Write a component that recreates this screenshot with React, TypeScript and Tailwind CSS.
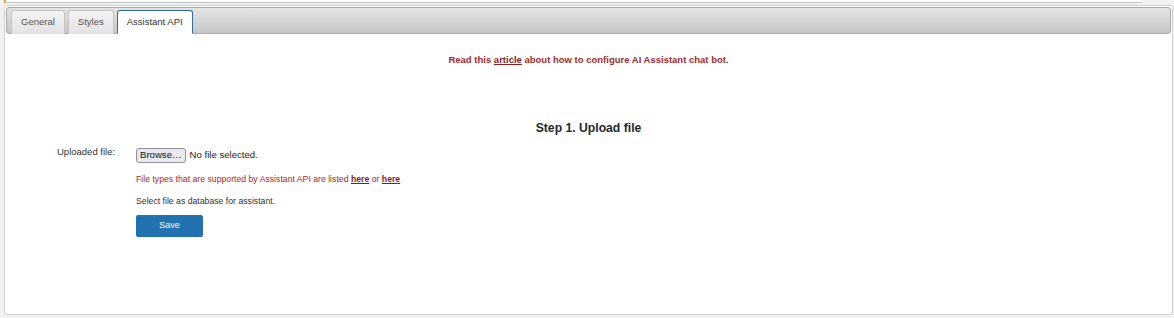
import React from 'react';

const tabs = ['General', 'Styles', 'Assistant API'];

export default function App() {
    const active = 'Assistant API';

    return (
        <div className="w-[1174px] h-[318px] bg-[#f1f1f1] font-['Liberation_Sans',Arial,sans-serif] overflow-hidden">
            <div className="ml-[4px] w-[1138px] h-[3px] bg-white border-b border-[#c3c4c7] border-l-2 border-l-[#dba617]" />
            <div className="ml-[4px] mr-[1px] mt-[2px] h-[310px] bg-white border border-[#d0d0d0] rounded-[3px] p-[1px]">
                <div className="h-[27px] flex items-end gap-[3px] pl-[4px] border border-[#aaaaaa] rounded-[3px] bg-gradient-to-b from-[#e4e4e4] to-[#c6c6c6]">
                    {tabs.map((t) => (
                        <div
                            key={t}
                            className={`h-[24px] flex items-center px-[9px] text-[9.5px] rounded-t-[3px] -mb-[1px] ${
                                t === active
                                    ? 'bg-white border border-[#2e6e9e] border-b-white text-[#333]'
                                    : 'bg-gradient-to-b from-[#f4f4f4] to-[#e2e2e2] border border-[#c5c5c5] border-b-0 text-[#555]'
                            }`}
                        >
                            {t}
                        </div>
                    ))}
                </div>

                <p className="mt-[19px] text-center text-[9.5px] font-bold text-[#a52a2a]">
                    Read this <a href="#" className="underline text-[#8b1a1a]">article</a> about how to configure AI Assistant chat bot.
                </p>

                <h3 className="mt-[52px] text-center text-[12.2px] font-bold text-[#23282d]">Step 1. Upload file</h3>

                <div className="mt-[10px] flex">
                    <div className="w-[80px] pl-[51px] -mt-[3px] text-[9.5px] text-[#333] whitespace-nowrap">Uploaded file:</div>
                    <div className="ml-[50px] flex flex-col">
                        <div className="flex items-center gap-[4px]">
                            <button className="h-[15px] px-[3px] text-[9.6px] leading-none text-[#111] bg-[#e9e9ed] border border-[#8f8f9d] rounded-[3px]">
                                Browse…
                            </button>
                            <span className="text-[9.6px] text-[#222]">No file selected.</span>
                        </div>
                        <p className="mt-[10px] text-[8.7px] text-[#b22222]">
                            File types that are supported by Assistant API are listed{' '}
                            <a href="#" className="font-bold underline text-[#8b1a1a]">here</a> or{' '}
                            <a href="#" className="font-bold underline text-[#8b1a1a]">here</a>
                        </p>
                        <p className="mt-[9px] text-[8.7px] text-[#333]">Select file as database for assistant.</p>
                        <button className="mt-[7px] w-[67px] h-[22px] bg-[#2271b1] text-white text-[9px] rounded-[2px]">
                            Save
                        </button>
                    </div>
                </div>
            </div>
        </div>
    );
}
